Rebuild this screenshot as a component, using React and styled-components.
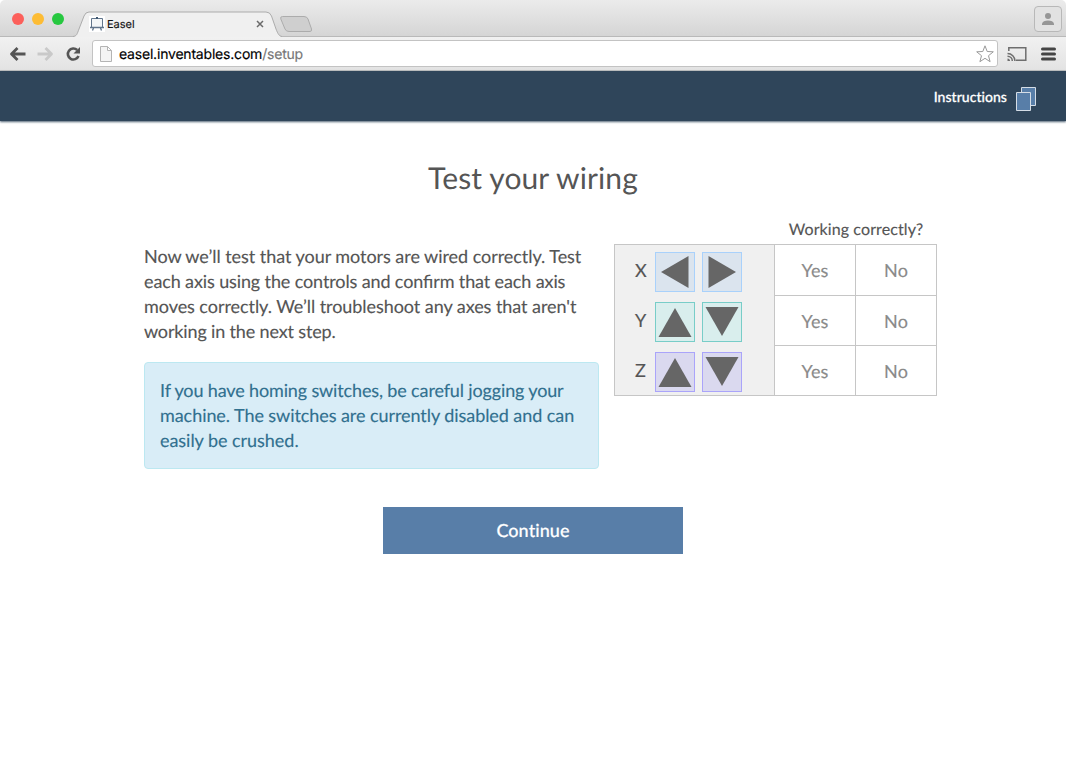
import React from "react";
import styled, { createGlobalStyle } from "styled-components";

const GlobalStyle = createGlobalStyle`
  *, *::before, *::after { box-sizing: border-box; }
  body { margin: 0; background: #fff; color: #555; font-family: Lato, sans-serif; text-rendering: geometricPrecision; }
  svg { display: block; flex: none; }
  button { font: inherit; margin: 0; padding: 0; cursor: pointer; text-rendering: inherit; }
`;

const Window = styled.div`
  width: 1066px;
  height: 762px;
  overflow: hidden;
`;

const TabStrip = styled.div`
  display: flex;
  height: 37px;
  border-radius: 5px 5px 0 0;
  border-bottom: 1px solid #b9b9b9;
  background: linear-gradient(#ebebeb, #d5d5d5);
`;

const Lights = styled.div`
  display: flex;
  gap: 8px;
  padding: 13px 0 0 12px;
  width: 73px;
`;

const Light = styled.span`
  width: 12px;
  height: 12px;
  border-radius: 50%;
  background: ${(p) => p.$color};
`;

const Tab = styled.div`
  position: relative;
  display: flex;
  width: 207px;
  height: 37px;
  padding: 16px 16px 0 16px;
  font: 11px/16px Inter, sans-serif;
  color: #111;
`;

const TabShape = styled.svg`
  position: absolute;
  left: 0;
  top: 0;
`;

const TabTitle = styled.span`
  position: relative;
  flex: 1;
  padding-left: 2px;
  -webkit-text-stroke: 0.15px #111;
`;

const TabIcon = styled.svg`
  position: relative;
`;

const Spacer = styled.div`
  flex: 1;
`;

const UserButton = styled.button`
  display: flex;
  align-items: center;
  justify-content: center;
  width: 28px;
  height: 26px;
  margin: 6px 4px 0 0;
  border: 1px solid #b8b8b8;
  border-radius: 4px;
  background: #e2e2e2;
`;

const Toolbar = styled.div`
  display: flex;
  align-items: center;
  height: 34px;
  padding: 0 9px;
  border-bottom: 1px solid #c4c4c4;
  background: linear-gradient(#f1f1f1, #e3e3e3);
`;

const NavIcons = styled.div`
  display: flex;
  gap: 11px;
  width: 83px;
`;

const AddressBar = styled.div`
  display: flex;
  align-items: center;
  width: 906px;
  height: 27px;
  padding: 0 3px 0 7px;
  border: 1px solid #c3c3c3;
  border-radius: 3px;
  background: #fff;
  font: 14px/20px Inter, sans-serif;
  color: #000;
`;

const Url = styled.span`
  flex: 1;
  padding: 2px 0 0 7px;
  letter-spacing: -0.2px;
  -webkit-text-stroke: 0.15px currentColor;
`;

const Path = styled.span`
  color: #777;
`;

const ToolIcons = styled.div`
  display: flex;
  align-items: center;
  gap: 14px;
  padding-left: 9px;
`;

const AppHeader = styled.header`
  display: flex;
  align-items: center;
  justify-content: flex-end;
  gap: 9px;
  height: 50px;
  padding: 4px 30px 0 0;
  background: #2f455a;
  box-shadow: 0 1px 2px rgba(47, 69, 90, 0.85);
  color: #fff;
  font-size: 14px;
  font-weight: 500;
  letter-spacing: 0.04px;
  font-variant-ligatures: none;
  -webkit-text-stroke: 0.25px #fff;
`;

const HeaderLabel = styled.span`
  padding-bottom: 4px;
`;

const Main = styled.main`
  width: 793px;
  margin: 0 auto 0 144px;
  padding-top: 36px;
`;

const Title = styled.h1`
  width: 778px;
  margin: 0;
  font-size: 30px;
  line-height: 42px;
  font-weight: 400;
  letter-spacing: 0.12px;
  text-align: center;
`;

const Columns = styled.div`
  display: flex;
  gap: 15px;
  margin-top: 17px;
`;

const Copy = styled.div`
  width: 455px;
  padding-top: 28px;
  font-size: 18px;
  line-height: 25px;
  -webkit-text-stroke: 0.15px currentColor;
`;

const Intro = styled.p`
  margin: 0 0 18px;
`;

const Line = styled.span`
  display: block;
  white-space: nowrap;
  letter-spacing: ${(p) => p.$tracking}px;
  font-feature-settings: "liga" 1;
`;

const Alert = styled.div`
  padding: 15px;
  border: 1px solid #bce8f1;
  border-radius: 4px;
  background: #d9edf7;
  color: #31708f;
`;

const Tester = styled.div`
  width: 323px;
  -webkit-text-stroke: 0.15px currentColor;
`;

const Question = styled.div`
  margin-left: 161px;
  padding-top: 2px;
  height: 28px;
  line-height: 24px;
  font-size: 16px;
  letter-spacing: 0.1px;
  text-align: center;
`;

const Grid = styled.div`
  display: flex;
  height: 152px;
  border: 1px solid #c6c6c6;
`;

const Axes = styled.div`
  display: grid;
  grid-auto-rows: 50px;
  width: 159px;
  background: #f0f0f0;
`;

const Axis = styled.div`
  display: flex;
  gap: 7px;
  padding: 7px 0 3px 20px;
  line-height: 37px;
  font-size: 18px;
`;

const AxisName = styled.span`
  width: 13px;
`;

const Jog = styled.button`
  width: 40px;
  height: 40px;
  border: 1px solid ${(p) => p.$line};
  background: ${(p) => p.$fill};
`;

const Answers = styled.div`
  display: grid;
  grid-template-columns: 81px 81px;
  grid-template-rows: 51px 50px 49px;
`;

const Answer = styled.button`
  border: 0 solid #c6c6c6;
  border-left-width: 1px;
  border-bottom-width: ${(p) => (p.$row === 2 ? 0 : 1)}px;
  padding-top: ${(p) => (p.$row === 0 ? 0 : 2)}px;
  background: #fff;
  color: #8a8a8a;
  font-size: 18px;
  line-height: 25px;
  letter-spacing: 0.1px;
  -webkit-text-stroke: 0.15px currentColor;
`;

const Continue = styled.button`
  display: block;
  width: 300px;
  height: 47px;
  margin: 38px 0 0 239px;
  padding-bottom: 2px;
  border: 0;
  background: #587ea8;
  color: #fff;
  font-size: 18px;
  font-weight: 500;
  letter-spacing: 0.08px;
  font-variant-ligatures: none;
  -webkit-text-stroke: 0.2px #fff;
`;

const arrows = {
  left: "M5 19 32.500 3V35Z",
  right: "M33 19 5.500 3V35Z",
  up: "M19 5 35.5 34H2.5Z",
  down: "M19 33 35.5 4H2.5Z",
};

const axes = [
  { name: "X", line: "#a9d1fb", fill: "#dbe4ee", moves: ["left", "right"] },
  { name: "Y", line: "#78cdc8", fill: "#d9eeed", moves: ["up", "down"] },
  { name: "Z", line: "#aaa4fa", fill: "#dad9ef", moves: ["up", "down"] },
];

const intro = [
  { text: "Now we’ll test that your motors are wired correctly. Test", tracking: -0.045 },
  { text: "each axis using the controls and confirm that each axis", tracking: -0.12 },
  { text: "moves correctly. We’ll troubleshoot any axes that aren't", tracking: -0.055 },
  { text: "working in the next step.", tracking: -0.15 },
];

const warning = [
  { text: "If you have homing switches, be careful jogging your", tracking: -0.14 },
  { text: "machine. The switches are currently disabled and can", tracking: -0.065 },
  { text: "easily be crushed.", tracking: -0.04 },
];

function Lines({ lines }) {
  return lines.map((l) => (
    <Line key={l.text} $tracking={l.tracking}>{l.text} </Line>
  ));
}

function BrowserTabs() {
  return (
    <TabStrip>
      <Lights>
        <Light $color="#fc605b" />
        <Light $color="#fdbc34" />
        <Light $color="#27c840" />
      </Lights>
      <Tab>
        <TabShape width="210" height="37" viewBox="0 0 210 37">
          <path d="M0 37C4 36 4 34 6 29L11 16Q12.500 12 16 12H193Q197 12 198.500 16L203 29C205 34 206 36 209 37Z" fill="#f0f0f0" />
          <path d="M0 36.500C4 36 4 34 6 29L11 16Q12.500 12 16 12H193Q197 12 198.500 16L203 29C205 34 206 36 209 36.500" fill="none" stroke="#acacac" />
        </TabShape>
        <TabIcon width="16" height="16" viewBox="0 0 16 16">
          <path d="M0 0H16V16H0Z" fill="#fff" />
          <path d="M2.500 2.500H13.500V11.500H2.500Z" fill="#f3f6f8" stroke="#61758c" />
          <path d="M1 11.500H15M4.500 12 3.500 14.500M11.500 12 12.500 14.500" fill="none" stroke="#61758c" strokeWidth="1.300" />
          <path d="M7 1H9V3H7Z" fill="#3f5870" />
        </TabIcon>
        <TabTitle>Easel</TabTitle>
        <TabIcon width="8" height="16" viewBox="0 0 8 16">
          <path d="M1 5 7 11M7 5 1 11" stroke="#6a6a6a" strokeWidth="1.500" />
        </TabIcon>
      </Tab>
      <svg width="34" height="36" viewBox="0 0 34 36">
        <path d="M2.500 16.500H24Q27 16.500 28 19L31.500 29Q32 31.500 30 31.500H9Q6 31.500 5 29L.8 19Q0 16.500 2.500 16.500Z" fill="#cfcfcf" stroke="#acacac" />
      </svg>
      <Spacer />
      <UserButton aria-label="Profile">
        <svg width="14" height="14" viewBox="0 0 14 14" fill="#969696">
          <circle cx="7" cy="4" r="3" />
          <path d="M1 13V11.500Q2 8.500 7 8.500T13 11.500V13Z" />
        </svg>
      </UserButton>
    </TabStrip>
  );
}

function BrowserToolbar() {
  return (
    <Toolbar>
      <NavIcons>
        <svg width="17" height="16" viewBox="0 0 17 16" fill="none" stroke="#555" strokeWidth="2.800" strokeLinejoin="round">
          <path d="M16.500 8H3M8.500 2 2.500 8 8.500 14" />
        </svg>
        <svg width="17" height="16" viewBox="0 0 17 16" fill="none" stroke="#c9c9c9" strokeWidth="2.800" strokeLinejoin="round">
          <path d="M.5 8H14M8.500 2 14.500 8 8.500 14" />
        </svg>
        <svg width="17" height="16" viewBox="0 0 17 16">
          <path d="M12.200 4A5.500 5.500 0 1 0 13.500 10" fill="none" stroke="#555" strokeWidth="2.600" />
          <path d="M15 1V7.500H8.500Z" fill="#555" />
        </svg>
      </NavIcons>
      <AddressBar>
        <svg width="12" height="16" viewBox="0 0 12 16">
          <path d="M.5.5H7.500L11.500 4.500V15.500H.5ZM7.500.5V4.500H11.500" fill="#f4f4f4" stroke="#b4b4b4" />
        </svg>
        <Url>easel.inventables.com<Path>/setup</Path></Url>
        <svg width="18" height="18" viewBox="0 0 18 18">
          <path d="M9 .8 11.200 6.500 17.300 6.800 12.500 10.700 14.100 16.700 9 13.300 3.900 16.700 5.500 10.700 .7 6.800 6.800 6.500Z" fill="#fff" stroke="#999" strokeLinejoin="round" />
        </svg>
      </AddressBar>
      <ToolIcons>
        <svg width="20" height="16" viewBox="0 0 20 16" fill="none" stroke="#6e6e6e" strokeWidth="1.500">
          <path d="M1.800 5V1.800H18.800V14.200H9" />
          <path d="M.5 7.500A7.500 7.500 0 0 1 8 15M.5 10.200A4.800 4.800 0 0 1 5.300 15" />
          <path d="M.5 12.500V15H3A2.500 2.500 0 0 0 .5 12.500Z" fill="#6e6e6e" stroke="none" />
        </svg>
        <svg width="15" height="14" viewBox="0 0 15 14" stroke="#454545" strokeWidth="3" strokeLinecap="round">
          <path d="M1.500 2H13.500M1.500 7H13.500M1.500 12H13.500" />
        </svg>
      </ToolIcons>
    </Toolbar>
  );
}

export default function App() {
  return (
    <Window>
      <GlobalStyle />
      <BrowserTabs />
      <BrowserToolbar />
      <AppHeader>
        <HeaderLabel>Instructions</HeaderLabel>
        <svg width="20" height="25" viewBox="0 0 20 25" fill="#587ea8" stroke="#d5dde6">
          <path d="M5.500 1.500H19.500V19.500H5.500Z" />
          <path d="M.5 6.500H14.500V24.500H.5Z" />
        </svg>
      </AppHeader>
      <Main>
        <Title>Test your wiring</Title>
        <Columns>
          <Copy>
            <Intro>
              <Lines lines={intro} />
            </Intro>
            <Alert>
              <Lines lines={warning} />
            </Alert>
          </Copy>
          <Tester>
            <Question>Working correctly?</Question>
            <Grid>
              <Axes>
                {axes.map((a) => (
                  <Axis key={a.name}>
                    <AxisName>{a.name}</AxisName>
                    {a.moves.map((m) => (
                      <Jog key={m} $line={a.line} $fill={a.fill} aria-label={`${a.name} ${m}`}>
                        <svg width="38" height="38" viewBox="0 0 38 38" fill="#666">
                          <path d={arrows[m]} />
                        </svg>
                      </Jog>
                    ))}
                  </Axis>
                ))}
              </Axes>
              <Answers>
                {axes.map((a, i) => (
                  <React.Fragment key={a.name}>
                    <Answer $row={i}>Yes</Answer>
                    <Answer $row={i}>No</Answer>
                  </React.Fragment>
                ))}
              </Answers>
            </Grid>
          </Tester>
        </Columns>
        <Continue>Continue</Continue>
      </Main>
    </Window>
  );
}
